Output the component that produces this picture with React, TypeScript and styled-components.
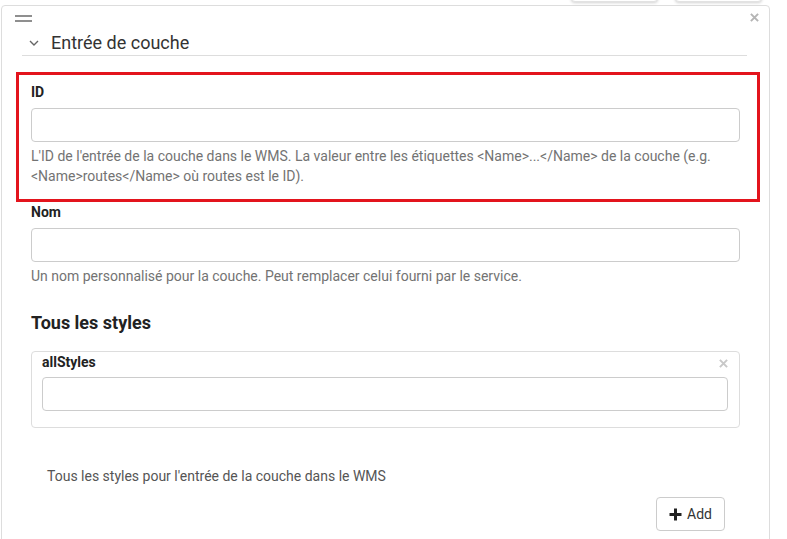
import React from "react";
import styled, { createGlobalStyle } from "styled-components";

const Global = createGlobalStyle`
  html, body { margin: 0; padding: 0; background: #fff; }
  body { font-family: Roboto, "Liberation Sans", Arial, sans-serif; color: #333; overflow: hidden; }
  * { box-sizing: border-box; }
`;

const Page = styled.div`
  width: 787px;
  height: 539px;
  padding: 0 17px 0 1px;
  overflow: hidden;
`;

const TopBar = styled.div`
  display: flex;
  justify-content: flex-end;
  gap: 17px;
  padding-right: 8px;
  margin-top: -30px;
  height: 32px;
`;

const GhostButton = styled.div`
  width: 87px;
  height: 32px;
  background: #fff;
  border: 1px solid #e2e2e2;
  border-radius: 4px;
  box-shadow: 0 1px 3px rgba(0, 0, 0, 0.18);
`;

const Card = styled.div`
  margin-top: 3px;
  border: 1px solid #ddd;
  border-radius: 4px;
  height: 600px;
  background: #fff;
`;

const CardTop = styled.div`
  display: flex;
  justify-content: space-between;
  align-items: flex-start;
  padding: 9px 10px 0 13px;
  height: 20px;
  & > svg { margin-top: -2px; }
`;

const Handle = styled.div`
  display: flex;
  flex-direction: column;
  gap: 3px;
  width: 17px;
  & > span {
    display: block;
    height: 2px;
    background: #8f8f8f;
  }
`;

const CloseIcon = ({ size = 9, color = "#bbb" }: { size?: number; color?: string }) => (
  <svg width={size} height={size} viewBox="0 0 10 10">
    <path d="M1 1 L9 9 M9 1 L1 9" stroke={color} strokeWidth="2.2" strokeLinecap="butt" />
  </svg>
);

const Header = styled.div`
  display: flex;
  align-items: center;
  gap: 12px;
  margin: 0 22px 0 20px;
  padding: 4px 0 0 7px;
  height: 30px;
  border-bottom: 1px solid #ddd;
`;

const Title = styled.span`
  font-size: 18px;
  color: #333;
  line-height: 26px;
`;

const Chevron = () => (
  <svg width="10" height="6" viewBox="0 0 10 6">
    <polyline points="1,1 5,5 9,1" fill="none" stroke="#666" strokeWidth="1.4" />
  </svg>
);

const Body = styled.div`
  padding: 16px 9px 0 14px;
`;

const FieldGroup = styled.div<{ $highlight?: boolean }>`
  border: ${(p) => (p.$highlight ? "3px solid #e3141d" : "none")};
  padding: ${(p) => (p.$highlight ? "7px 17px 13px 12px" : "0 20px 0 15px")};
`;

const Label = styled.div`
  font-size: 14px;
  font-weight: 700;
  line-height: 20px;
  color: #222;
`;

const Input = styled.input`
  display: block;
  width: 100%;
  height: 34px;
  margin-top: 6px;
  border: 1px solid #ccc;
  border-radius: 4px;
  background: #fff;
  font: inherit;
  padding: 6px 12px;
  outline: none;
`;

const Help = styled.div`
  margin-top: 4px;
  font-size: 14px;
  line-height: 20px;
  color: #737373;
`;

const SectionTitle = styled.div`
  margin-top: 24px;
  font-size: 18px;
  font-weight: 700;
  line-height: 26px;
  color: #222;
`;

const ArrayBox = styled.div`
  margin-top: 15px;
  border: 1px solid #ddd;
  border-radius: 4px;
  padding: 0 11px 16px 10px;
`;

const ArrayHead = styled.div`
  display: flex;
  justify-content: space-between;
  align-items: center;
  & > svg { margin-top: 3px; }
`;

const ArrayInput = styled(Input)`
  margin-top: 5px;
`;

const ArrayHelp = styled.div`
  margin-top: 38px;
  padding-left: 16px;
  font-size: 14px;
  line-height: 20px;
  color: #555;
`;

const Actions = styled.div`
  display: flex;
  justify-content: flex-end;
  padding-right: 15px;
  margin-top: 11px;
`;

const AddButton = styled.button`
  display: flex;
  align-items: center;
  gap: 5px;
  height: 34px;
  padding: 0 12px 0 12px;
  background: #fff;
  border: 1px solid #ccc;
  border-radius: 4px;
  font-family: Roboto, "Liberation Sans", Arial, sans-serif;
  font-size: 14px;
  color: #333;
`;

const PlusIcon = () => (
  <svg width="13" height="13" viewBox="0 0 13 13">
    <path d="M6.5 0.5 V12.5 M0.5 6.5 H12.5" stroke="#222" strokeWidth="3" />
  </svg>
);

export default function App() {
  return (
    <>
      <Global />
      <Page>
        <TopBar>
          <GhostButton />
          <GhostButton />
        </TopBar>
        <Card>
          <CardTop>
            <Handle>
              <span />
              <span />
            </Handle>
            <CloseIcon size={9} color="#b5b5b5" />
          </CardTop>
          <Header>
            <Chevron />
            <Title>Entrée de couche</Title>
          </Header>
          <Body>
            <FieldGroup $highlight>
              <Label>ID</Label>
              <Input />
              <Help>
                L'ID de l'entrée de la couche dans le WMS. La valeur entre les étiquettes &lt;Name&gt;...&lt;/Name&gt; de la couche (e.g.
                &lt;Name&gt;routes&lt;/Name&gt; où routes est le ID).
              </Help>
            </FieldGroup>
            <FieldGroup>
              <Label>Nom</Label>
              <Input />
              <Help>Un nom personnalisé pour la couche. Peut remplacer celui fourni par le service.</Help>
              <SectionTitle>Tous les styles</SectionTitle>
              <ArrayBox>
                <ArrayHead>
                  <Label>allStyles</Label>
                  <CloseIcon size={9} color="#c8c8c8" />
                </ArrayHead>
                <ArrayInput />
              </ArrayBox>
              <ArrayHelp>Tous les styles pour l'entrée de la couche dans le WMS</ArrayHelp>
              <Actions>
                <AddButton>
                  <PlusIcon />
                  Add
                </AddButton>
              </Actions>
            </FieldGroup>
          </Body>
        </Card>
      </Page>
    </>
  );
}
